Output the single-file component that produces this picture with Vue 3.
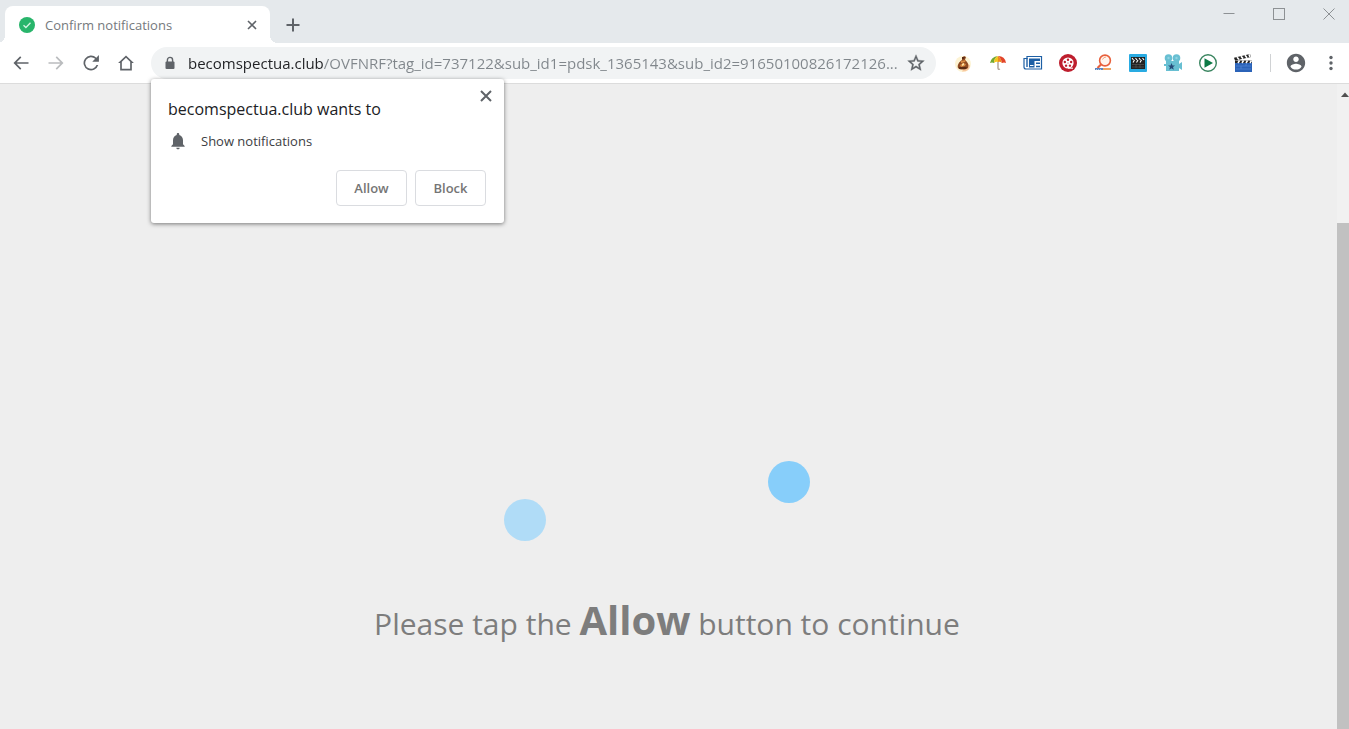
<template>
  <div class="browser">
    <header class="tab-strip">
      <div class="tab">
        <svg class="favicon" viewBox="0 0 16 16" aria-hidden="true">
          <circle cx="8" cy="8" r="8" fill="#28b56b" />
          <path d="M4.5 8.2l2.4 2.3 4.6-4.8" fill="none" stroke="#d5f5e3" stroke-width="1.3" />
        </svg>
        <span class="tab-title">Confirm notifications</span>
        <button class="icon-button tab-close" aria-label="Close tab">
          <svg width="10" height="10" viewBox="0 0 10 10">
            <path d="M1 1l8 8M9 1l-8 8" stroke="#5f6368" stroke-width="1.6" />
          </svg>
        </button>
      </div>
      <button class="icon-button new-tab" aria-label="New tab">
        <svg width="14" height="14" viewBox="0 0 14 14">
          <path d="M7 0.5v13M0.5 7h13" stroke="#5f6368" stroke-width="2" />
        </svg>
      </button>
      <div class="window-buttons">
        <button class="icon-button" aria-label="Minimize">
          <svg width="12" height="12" viewBox="0 0 12 12"><path d="M0.5 5.5h11" stroke="#8d9194" /></svg>
        </button>
        <button class="icon-button" aria-label="Maximize">
          <svg width="12" height="12" viewBox="0 0 12 12">
            <rect x="0.5" y="0.5" width="11" height="11" fill="none" stroke="#8d9194" />
          </svg>
        </button>
        <button class="icon-button" aria-label="Close">
          <svg width="12" height="12" viewBox="0 0 12 12"><path d="M0.5 0.5l11 11M11.5 0.5l-11 11" stroke="#8d9194" /></svg>
        </button>
      </div>
    </header>

    <div class="toolbar">
      <button v-for="item in navigation" :key="item.name" class="icon-button tool" :aria-label="item.name">
        <svg width="20" height="20" viewBox="0 0 24 24">
          <path :d="item.path" :fill="item.color" />
        </svg>
      </button>

      <div class="omnibox">
        <svg class="lock" width="14" height="14" viewBox="0 0 14 14" aria-hidden="true">
          <path d="M4.4 6V4a2.6 2.6 0 0 1 5.2 0v2" fill="none" stroke="#5f6368" stroke-width="1.4" />
          <rect x="2.5" y="5.5" width="9" height="7.5" rx="1" fill="#5f6368" />
        </svg>
        <input v-model="address" class="address" type="text" aria-label="Address" spellcheck="false" />
        <button class="icon-button" aria-label="Bookmark this page">
          <svg width="20" height="20" viewBox="0 0 24 24">
            <path
              d="M22 9.24l-7.19-.62L12 2 9.19 8.63 2 9.24l5.46 4.73L5.82 21 12 17.27 18.18 21l-1.63-7.03L22 9.24zM12 15.4l-3.76 2.27 1-4.28-3.32-2.88 4.38-.38L12 6.1l1.71 4.04 4.38.38-3.32 2.88 1 4.28L12 15.4z"
              fill="#5f6368"
              stroke="#5f6368"
              stroke-width="0.4"
            />
          </svg>
        </button>
      </div>

      <div class="extensions">
        <button class="icon-button tool" aria-label="Money bag">
          <svg width="20" height="20" viewBox="0 0 20 20">
            <circle cx="10" cy="11" r="8" fill="#fdf3d3" />
            <path d="M9 18.5q8 0 8-6l-3-3z" fill="#f8c8a0" />
            <path d="M9 5l2-2 2 1-1 3c3 2 4 5 3 8-3 2-8 2-10 0-1-3 1-6 4-8z" fill="#8e4a22" />
            <path d="M8 8l5-1-1 2-4 1zM7 12l3-2 3 1-1 2-4 1z" fill="#d98a43" />
            <path d="M9 4h3l-1 2H9zM6 14h8l-1 2H6z" fill="#5e2c14" />
            <path d="M9 11l2-1v2l-2 1z" fill="#fbe2a4" />
          </svg>
        </button>
        <button class="icon-button tool" aria-label="Weather">
          <svg width="20" height="20" viewBox="0 0 20 20">
            <path d="M10 9v6q0 2 2 1" fill="none" stroke="#a9978b" stroke-width="1.3" />
            <path d="M2 10q1-6 8-7-4 2-4 7-2-1-4 0z" fill="#72a833" />
            <path d="M6 10q0-5 4-7v6q-2-1-4 1z" fill="#f3c51e" />
            <path d="M10 3q3 2 4 7-2-2-4-1z" fill="#f08a1d" />
            <path d="M10 3q7 0 8 7-2-1-4 0-1-5-4-7z" fill="#e2442a" />
          </svg>
        </button>
        <button class="icon-button tool" aria-label="News">
          <svg width="20" height="20" viewBox="0 0 20 20">
            <path d="M4 3.5h14.5V16H3q-2 0-2-2V5.5h3z" fill="#fff" stroke="#1d5fa5" stroke-width="1.2" />
            <path d="M4 5v9" stroke="#1d5fa5" stroke-width="1.4" />
            <path d="M6 5.5h11V8H6zM6 8h5.5v6.5H6zM13 9.5h4V11h-4zM13 12.8h4v1.5h-4z" fill="#1d5fa5" />
            <path d="M7 12.5h3.5" stroke="#fff" />
          </svg>
        </button>
        <button class="icon-button tool" aria-label="Film reel">
          <svg width="20" height="20" viewBox="0 0 20 20">
            <circle cx="10" cy="10" r="9" fill="#be1e2d" />
            <circle cx="10" cy="10" r="5.6" fill="#fff" />
            <circle v-for="hole in reelHoles" :key="hole.x" :cx="hole.x" :cy="hole.y" r="1.2" fill="#be1e2d" />
            <circle cx="10" cy="10" r="0.6" fill="#be1e2d" />
            <path d="M10 15.2h5" stroke="#fff" />
          </svg>
        </button>
        <button class="icon-button tool" aria-label="Search">
          <svg width="20" height="20" viewBox="0 0 20 20">
            <circle cx="12" cy="7.5" r="5.4" fill="#fff5ee" stroke="#e8603c" stroke-width="1.6" />
            <path d="M9.5 6.5q1-2.5 3.5-2.5" fill="none" stroke="#f3a27c" />
            <path d="M8.5 11l-4 4" stroke="#e8603c" stroke-width="2.2" />
            <path d="M2 16h8" stroke="#4a78ba" stroke-width="1.8" />
            <path d="M3 16.5h6" stroke="#c3d3ea" stroke-width="0.8" stroke-dasharray="1 1" />
            <path d="M10 16h8" stroke="#f09a50" stroke-width="1.8" />
          </svg>
        </button>
        <button class="icon-button tool" aria-label="Movies">
          <svg width="20" height="20" viewBox="0 0 20 20">
            <rect x="1" y="1" width="18" height="18" rx="1" fill="#29abe2" />
            <rect x="3" y="4" width="14" height="12" fill="#222" />
            <path
              d="M4 5l1.5 2M7.5 5L9 7M11 5l1.5 2M14.5 5L16 7M5 9.5L6.5 7M8.5 9.5L10 7M12 9.5L13.5 7"
              stroke="#fff"
              stroke-width="1.1"
            />
            <path d="M4 11.5h12M4 14h12M8 11v4M12 11v4" stroke="#555" stroke-width="0.7" />
          </svg>
        </button>
        <button class="icon-button tool" aria-label="Video camera">
          <svg width="20" height="20" viewBox="0 0 20 20">
            <g fill="#68bfd2">
              <circle cx="5.5" cy="5" r="3.8" />
              <circle cx="13.5" cy="5" r="3.8" />
              <path d="M3 8h13v3l3-2v8l-3-2v3H3v-5H1v-2h2z" />
            </g>
            <circle cx="5.5" cy="5" r="1.2" fill="#8fd3e2" />
            <circle cx="13.5" cy="5" r="1.2" fill="#8fd3e2" />
            <path d="M8.5 10l1 2.5H12l-2 1.6.8 2.6-2.3-1.5-2.3 1.5.8-2.6-2-1.6h2.5z" fill="#274a78" />
          </svg>
        </button>
        <button class="icon-button tool" aria-label="Player">
          <svg width="20" height="20" viewBox="0 0 20 20">
            <circle cx="10" cy="10" r="8.3" fill="#fff" stroke="#3a8560" stroke-width="1.4" />
            <path d="M6.5 5.2L15 10l-8.500 4.800z" fill="#0c7a45" />
          </svg>
        </button>
        <button class="icon-button tool" aria-label="Clapperboard">
          <svg width="20" height="20" viewBox="0 0 20 20">
            <rect x="2" y="8" width="17" height="11" fill="#2b63b8" />
            <path d="M2 7.5L1 4.8 17 1l1 3z" fill="#222" />
            <path d="M4 4.2l2 2.3M8 3.3l2 2.3M12 2.3l2 2.4M16 1.4l1 2.6" stroke="#fff" stroke-width="1.7" />
            <path d="M2 7.5h17V10H2z" fill="#222" />
            <path d="M5 10l1.5-2.5M9 10l1.5-2.5M13 10l1.5-2.5M17 10l1.5-2.5" stroke="#fff" stroke-width="1.5" />
            <path d="M3 13h15M3 16h15M8 13v3M13 11v2" stroke="#5187d6" stroke-width="0.7" />
          </svg>
        </button>
      </div>

      <div class="separator"></div>
      <button class="icon-button tool" aria-label="Profile">
        <svg width="22" height="22" viewBox="0 0 24 24">
          <path
            d="M12 2C6.48 2 2 6.48 2 12s4.48 10 10 10 10-4.48 10-10S17.52 2 12 2zm0 3c1.66 0 3 1.34 3 3s-1.34 3-3 3-3-1.34-3-3 1.34-3 3-3zm0 14.2c-2.5 0-4.71-1.28-6-3.22.03-1.99 4-3.08 6-3.08 1.99 0 5.97 1.09 6 3.08-1.29 1.94-3.5 3.22-6 3.22z"
            fill="#5f6368"
          />
        </svg>
      </button>
      <button class="icon-button tool" aria-label="Menu">
        <svg width="20" height="20" viewBox="0 0 20 20" fill="#5f6368">
          <circle cx="10" cy="4.5" r="1.7" />
          <circle cx="10" cy="10" r="1.7" />
          <circle cx="10" cy="15.5" r="1.7" />
        </svg>
      </button>

      <section v-if="promptOpen" class="prompt" role="dialog" aria-labelledby="prompt-title">
        <div class="prompt-head">
          <h2 id="prompt-title">becomspectua.club wants to</h2>
          <button class="icon-button prompt-close" aria-label="Dismiss" @click="closePrompt">
            <svg width="12" height="12" viewBox="0 0 12 12">
              <path d="M1 1l10 10M11 1L1 11" stroke="#5f6368" stroke-width="2" />
            </svg>
          </button>
        </div>
        <p class="permission">
          <svg width="20" height="20" viewBox="0 0 24 24" aria-hidden="true">
            <path
              d="M12 22c1.1 0 2-.9 2-2h-4c0 1.1.89 2 2 2zm6-6v-5c0-3.07-1.64-5.64-4.5-6.32V4c0-.83-.67-1.5-1.5-1.5s-1.5.67-1.5 1.5v.68C7.63 5.36 6 7.92 6 11v5l-2 2v1h16v-1l-2-2z"
              fill="#5f6368"
            />
          </svg>
          <span>Show notifications</span>
        </p>
        <div class="prompt-actions">
          <button class="choice" @click="closePrompt">Allow</button>
          <button class="choice" @click="closePrompt">Block</button>
        </div>
      </section>
    </div>

    <div class="viewport">
      <main class="page">
        <div class="loader">
          <span class="dot dot-faded"></span>
          <span class="dot"></span>
        </div>
        <p class="message">Please tap the <strong>Allow</strong> button to continue</p>
      </main>
      <div class="scrollbar" aria-hidden="true">
        <svg width="12" height="20" viewBox="0 0 12 20"><path d="M4 13l4-4.5 4 4.5z" fill="#505050" /></svg>
        <div class="scroll-thumb"></div>
      </div>
    </div>
  </div>
</template>

<script setup>
import { ref } from 'vue';

const address = ref('becomspectua.club/OVFNRF?tag_id=737122&sub_id1=pdsk_1365143&sub_id2=91650100826172126...');
const promptOpen = ref(true);

const navigation = [
  { name: 'Back', color: '#5f6368', path: 'M21 11H6.83l5.59-5.59L11 4l-8 8 8 8 1.41-1.41L6.83 13H21v-2z' },
  { name: 'Forward', color: '#babcbe', path: 'M3 11h14.17l-5.59-5.59L13 4l8 8-8 8-1.41-1.41L17.17 13H3v-2z' },
  {
    name: 'Reload',
    color: '#5f6368',
    path: 'M18.4 5.6A9 9 0 1 0 20.7 14.5h-2.1A7 7 0 1 1 17 7l-3.5 3.5H21.5V2.5z'
  },
  { name: 'Home', color: '#5f6368', path: 'M12 3L2.5 12H5v9h14v-9h2.5L12 3zm5 16H7v-8.5l5-4.8 5 4.8V19z' }
];

// Five holes placed round the centre of the film reel
const reelHoles = [0, 1, 2, 3, 4].map((i) => {
  const angle = (i * 72 - 90) * (Math.PI / 180);
  return { x: 10 + Math.cos(angle) * 3.3, y: 10 + Math.sin(angle) * 3.3 };
});

const closePrompt = () => {
  promptOpen.value = false;
};
</script>

<style>
body {
  margin: 0;
}
</style>

<style scoped>
.browser {
  display: flex;
  flex-direction: column;
  min-height: 100vh;
  background: #eee;
  font-family: "Open Sans", "Noto Sans", sans-serif;
  color: #202124;
}

.icon-button {
  display: flex;
  align-items: center;
  justify-content: center;
  padding: 0;
  border: 0;
  background: none;
}

.tab-strip {
  display: flex;
  align-items: flex-end;
  height: 43px;
  padding-left: 5px;
  background: #e5e9ec;
}

.tab {
  position: relative;
  display: flex;
  align-items: center;
  box-sizing: border-box;
  width: 265px;
  height: 37px;
  padding: 0 10px 0 14px;
  border-radius: 8px 8px 0 0;
  background: #fff;
}

/* Flared corners where the tab meets the toolbar */
.tab::before,
.tab::after {
  content: "";
  position: absolute;
  bottom: 0;
  width: 8px;
  height: 8px;
}

.tab::before {
  right: 100%;
  background: radial-gradient(circle at 0 0, transparent 8px, #fff 8px);
}

.tab::after {
  left: 100%;
  background: radial-gradient(circle at 100% 0, transparent 8px, #fff 8px);
}

.favicon {
  width: 16px;
  height: 16px;
}

.tab-title {
  flex: 1;
  margin-left: 10px;
  font-size: 13px;
  color: #75797d;
}

.tab-close {
  width: 16px;
  height: 16px;
}

.new-tab {
  width: 28px;
  height: 37px;
  margin-left: 9px;
}

.window-buttons {
  display: flex;
  align-self: flex-start;
  margin-left: auto;
  margin-right: -5px;
}

.window-buttons .icon-button {
  width: 50px;
  height: 27px;
}

.toolbar {
  position: relative;
  z-index: 1;
  display: flex;
  align-items: center;
  height: 40px;
  padding: 0 1px 0 3px;
  border-bottom: 1px solid #dcdcdc;
  background: #fff;
}

.tool {
  flex: none;
  width: 35px;
  height: 32px;
}

.omnibox {
  display: flex;
  flex: 1;
  align-items: center;
  min-width: 0;
  height: 32px;
  margin: 0 9px 0 8px;
  padding: 0 10px 0 12px;
  box-sizing: border-box;
  border-radius: 16px;
  background: #f1f3f4;
}

.lock {
  flex: none;
}

.address {
  flex: 1;
  min-width: 0;
  margin: 0 8px 0 11px;
  padding: 0;
  border: 0;
  outline: 0;
  font-family: inherit;
  font-size: 15px;
  line-height: 24px;
  /* the host part is darker than the rest of the address */
  background: linear-gradient(to right, #202124 135px, #80868b 135px);
  background-clip: text;
  -webkit-background-clip: text;
  color: transparent;
  caret-color: #202124;
}

.extensions {
  display: flex;
}

.separator {
  width: 1px;
  height: 18px;
  margin: 0 7px 0 10px;
  background: #d0d2d4;
}

.prompt {
  position: absolute;
  top: 36px;
  left: 151px;
  box-sizing: border-box;
  width: 353px;
  padding: 18px 18px 17px 17px;
  border-radius: 3px;
  background: #fff;
  box-shadow: 0 1px 4px rgba(0, 0, 0, 0.5);
}

.prompt-head {
  display: flex;
  align-items: flex-start;
  justify-content: space-between;
}

.prompt h2 {
  margin: 0;
  font-size: 16px;
  font-weight: 400;
  line-height: 24px;
}

.prompt-close {
  width: 12px;
  height: 12px;
  margin: -7px -6px 0 0;
}

.permission {
  display: flex;
  align-items: center;
  margin: 10px 0 0;
  font-size: 13px;
  line-height: 20px;
  color: #3c4043;
}

.permission span {
  margin-left: 13px;
}

.prompt-actions {
  display: flex;
  justify-content: flex-end;
  gap: 8px;
  margin-top: 19px;
}

.choice {
  width: 71px;
  height: 36px;
  padding: 0;
  border: 1px solid #dadce0;
  border-radius: 4px;
  background: #fff;
  font-family: inherit;
  font-size: 13px;
  font-weight: 600;
  color: #757575;
}

.viewport {
  display: flex;
  flex: 1;
}

.page {
  display: flex;
  flex: 1;
  flex-direction: column;
  align-items: center;
  justify-content: flex-end;
  padding: 0 3px 73px 0;
}

.loader {
  display: flex;
  align-items: flex-start;
  justify-content: space-between;
  width: 306px;
  height: 80px;
  margin-right: 20px;
}

.dot {
  width: 42px;
  height: 42px;
  border-radius: 50%;
  background: #87cefa;
}

.dot-faded {
  align-self: flex-end;
  background: #b0dcf7;
}

.message {
  margin: 47px 0 0;
  font-size: 30px;
  line-height: 64px;
  color: #7d7d7d;
}

.message strong {
  font-size: 40px;
}

.scrollbar {
  display: flex;
  flex-direction: column;
  width: 12px;
  background: #f1f1f1;
}

.scroll-thumb {
  flex: 1;
  margin-top: 119px;
  background: #c1c1c1;
}
</style>
